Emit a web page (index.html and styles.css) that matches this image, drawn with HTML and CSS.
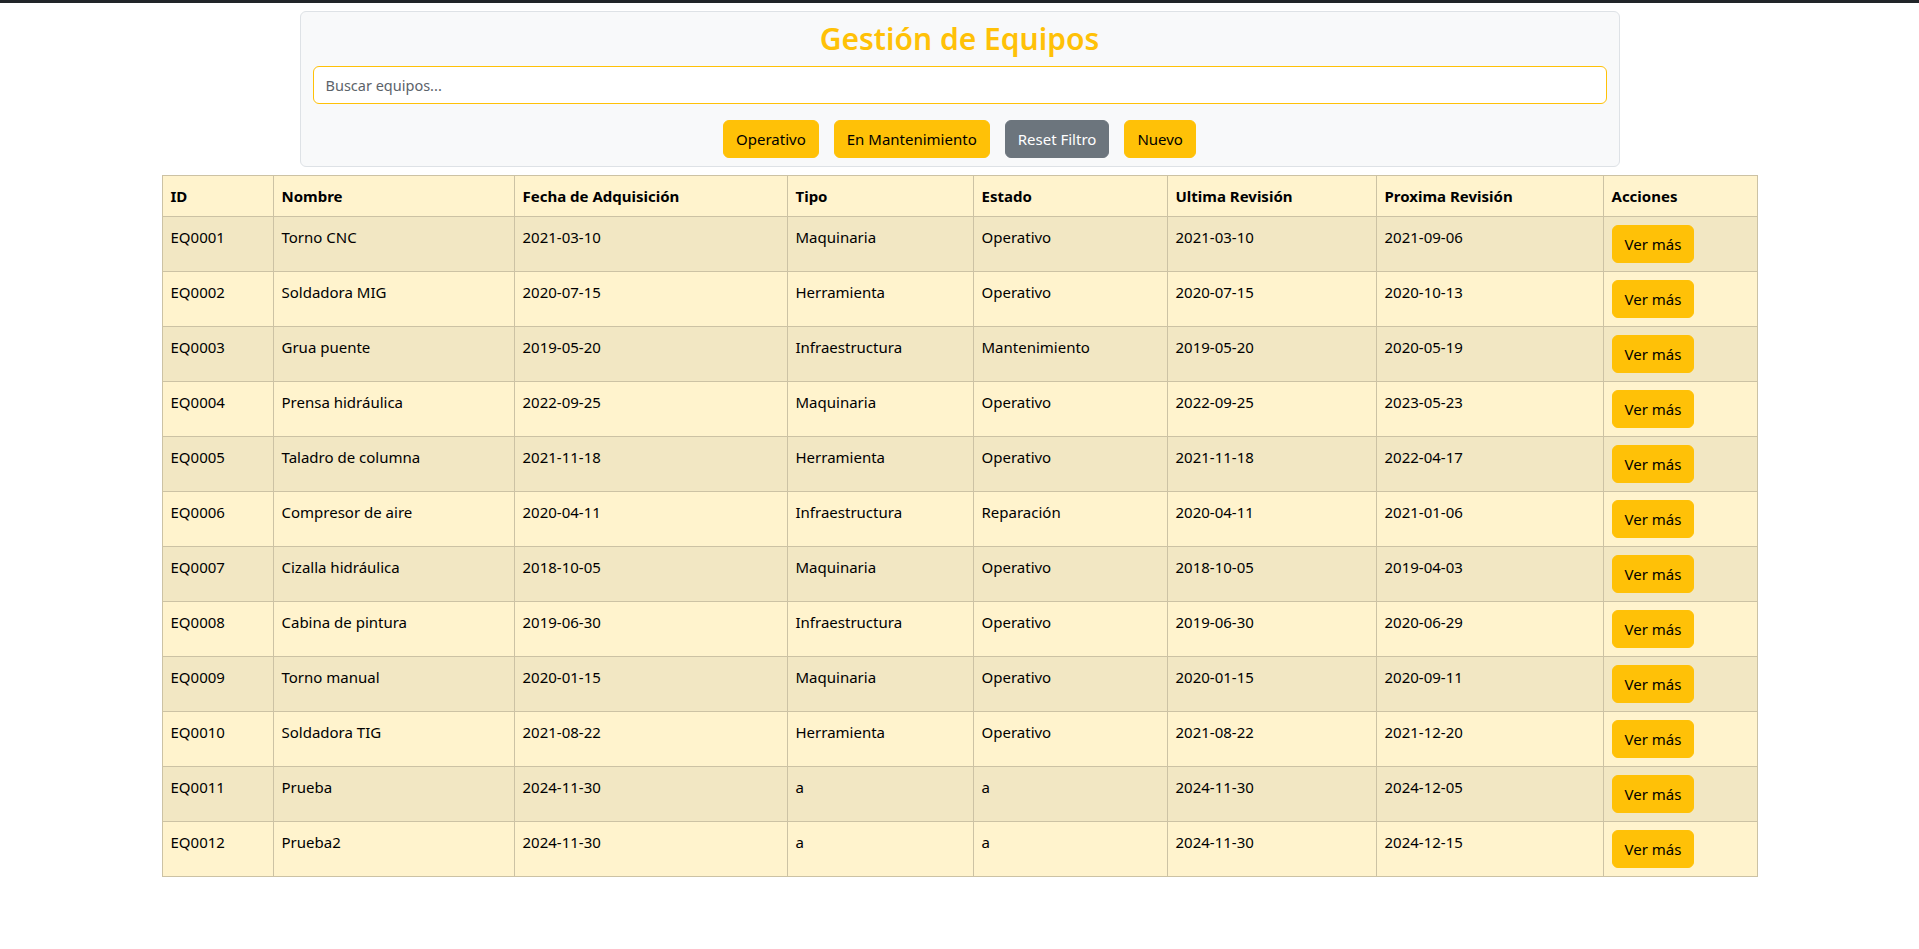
FILE: index.html
```html
<!DOCTYPE html>
<html lang="es">
<head>
<meta charset="utf-8">
<title>Gestión de Equipos</title>
<link rel="stylesheet" href="styles.css">
</head>
<body>
<div class="topbar"></div>
<div class="panel">
  <h2 class="title">Gestión de Equipos</h2>
  <input class="search" type="text" placeholder="Buscar equipos...">
  <div class="actions">
    <button class="btn btn-warning">Operativo</button>
    <button class="btn btn-warning">En Mantenimiento</button>
    <button class="btn btn-secondary">Reset Filtro</button>
    <button class="btn btn-warning">Nuevo</button>
  </div>
</div>
<table class="equipos">
  <colgroup>
    <col class="c-id"><col class="c-nombre"><col class="c-fecha"><col class="c-tipo"><col class="c-estado"><col class="c-ultima"><col class="c-proxima"><col class="c-acciones">
  </colgroup>
  <thead>
    <tr><th>ID</th><th>Nombre</th><th>Fecha de Adquisición</th><th>Tipo</th><th>Estado</th><th>Ultima Revisión</th><th>Proxima Revisión</th><th>Acciones</th></tr>
  </thead>
  <tbody>
    <tr><td>EQ0001</td><td>Torno CNC</td><td>2021-03-10</td><td>Maquinaria</td><td>Operativo</td><td>2021-03-10</td><td>2021-09-06</td><td><button class="btn btn-warning">Ver más</button></td></tr>
    <tr><td>EQ0002</td><td>Soldadora MIG</td><td>2020-07-15</td><td>Herramienta</td><td>Operativo</td><td>2020-07-15</td><td>2020-10-13</td><td><button class="btn btn-warning">Ver más</button></td></tr>
    <tr><td>EQ0003</td><td>Grua puente</td><td>2019-05-20</td><td>Infraestructura</td><td>Mantenimiento</td><td>2019-05-20</td><td>2020-05-19</td><td><button class="btn btn-warning">Ver más</button></td></tr>
    <tr><td>EQ0004</td><td>Prensa hidráulica</td><td>2022-09-25</td><td>Maquinaria</td><td>Operativo</td><td>2022-09-25</td><td>2023-05-23</td><td><button class="btn btn-warning">Ver más</button></td></tr>
    <tr><td>EQ0005</td><td>Taladro de columna</td><td>2021-11-18</td><td>Herramienta</td><td>Operativo</td><td>2021-11-18</td><td>2022-04-17</td><td><button class="btn btn-warning">Ver más</button></td></tr>
    <tr><td>EQ0006</td><td>Compresor de aire</td><td>2020-04-11</td><td>Infraestructura</td><td>Reparación</td><td>2020-04-11</td><td>2021-01-06</td><td><button class="btn btn-warning">Ver más</button></td></tr>
    <tr><td>EQ0007</td><td>Cizalla hidráulica</td><td>2018-10-05</td><td>Maquinaria</td><td>Operativo</td><td>2018-10-05</td><td>2019-04-03</td><td><button class="btn btn-warning">Ver más</button></td></tr>
    <tr><td>EQ0008</td><td>Cabina de pintura</td><td>2019-06-30</td><td>Infraestructura</td><td>Operativo</td><td>2019-06-30</td><td>2020-06-29</td><td><button class="btn btn-warning">Ver más</button></td></tr>
    <tr><td>EQ0009</td><td>Torno manual</td><td>2020-01-15</td><td>Maquinaria</td><td>Operativo</td><td>2020-01-15</td><td>2020-09-11</td><td><button class="btn btn-warning">Ver más</button></td></tr>
    <tr><td>EQ0010</td><td>Soldadora TIG</td><td>2021-08-22</td><td>Herramienta</td><td>Operativo</td><td>2021-08-22</td><td>2021-12-20</td><td><button class="btn btn-warning">Ver más</button></td></tr>
    <tr><td>EQ0011</td><td>Prueba</td><td>2024-11-30</td><td>a</td><td>a</td><td>2024-11-30</td><td>2024-12-05</td><td><button class="btn btn-warning">Ver más</button></td></tr>
    <tr><td>EQ0012</td><td>Prueba2</td><td>2024-11-30</td><td>a</td><td>a</td><td>2024-11-30</td><td>2024-12-15</td><td><button class="btn btn-warning">Ver más</button></td></tr>
  </tbody>
</table>
</body>
</html>
```

FILE: styles.css
```css
* { box-sizing: border-box; }
html, body {
  margin: 0;
  background: #fff;
  color: #212529;
  font-family: "Noto Sans", "Open Sans", sans-serif;
  font-size: 16px;
  line-height: 1.5;
}
.topbar {
  height: 3px;
  background: #212529;
}
.panel {
  width: 1320px;
  margin: 8px auto 0;
  padding: 8px 12px 8px;
  background: #f8f9fa;
  border: 1px solid #dee2e6;
  border-radius: 6px;
}
.title {
  margin: 0 0 8px;
  text-align: center;
  color: #ffc107;
  font-size: 30px;
  font-weight: 600;
  line-height: 38px;
}
.search {
  display: block;
  width: 100%;
  height: 38px;
  margin: 0 0 16px;
  padding: 6px 12px;
  font: inherit;
  font-size: 14.5px;
  color: #212529;
  background: #fff;
  border: 1px solid #ffc107;
  border-radius: 6px;
  outline: none;
}
.search::placeholder { color: #5c636a; }
.actions {
  display: flex;
  justify-content: center;
  gap: 15px;
}
.btn {
  display: inline-block;
  height: 38px;
  padding: 6px 12px;
  font: inherit;
  font-size: 15px;
  line-height: 24px;
  border: 1px solid transparent;
  border-radius: 6px;
  cursor: pointer;
}
.btn-warning { background: #ffc107; border-color: #ffc107; color: #000; }
.btn-secondary { background: #6c757d; border-color: #6c757d; color: #fff; }

.equipos {
  width: 1595px;
  margin: 8px auto 0;
  border-collapse: collapse;
  table-layout: fixed;
  color: #000;
  font-size: 15px;
  background: #fff3cd;
}
.equipos th, .equipos td {
  padding: 8px;
  border: 1px solid #ccc2a4;
  text-align: left;
  vertical-align: top;
  line-height: 24px;
}
.equipos th { font-weight: 700; }
.equipos tbody tr:nth-child(odd) { background: #f2e7c3; }
.c-id { width: 111px; }
.c-nombre { width: 241px; }
.c-fecha { width: 273px; }
.c-tipo { width: 186px; }
.c-estado { width: 194px; }
.c-ultima { width: 209px; }
.c-proxima { width: 227px; }
.c-acciones { width: 154px; }
```
